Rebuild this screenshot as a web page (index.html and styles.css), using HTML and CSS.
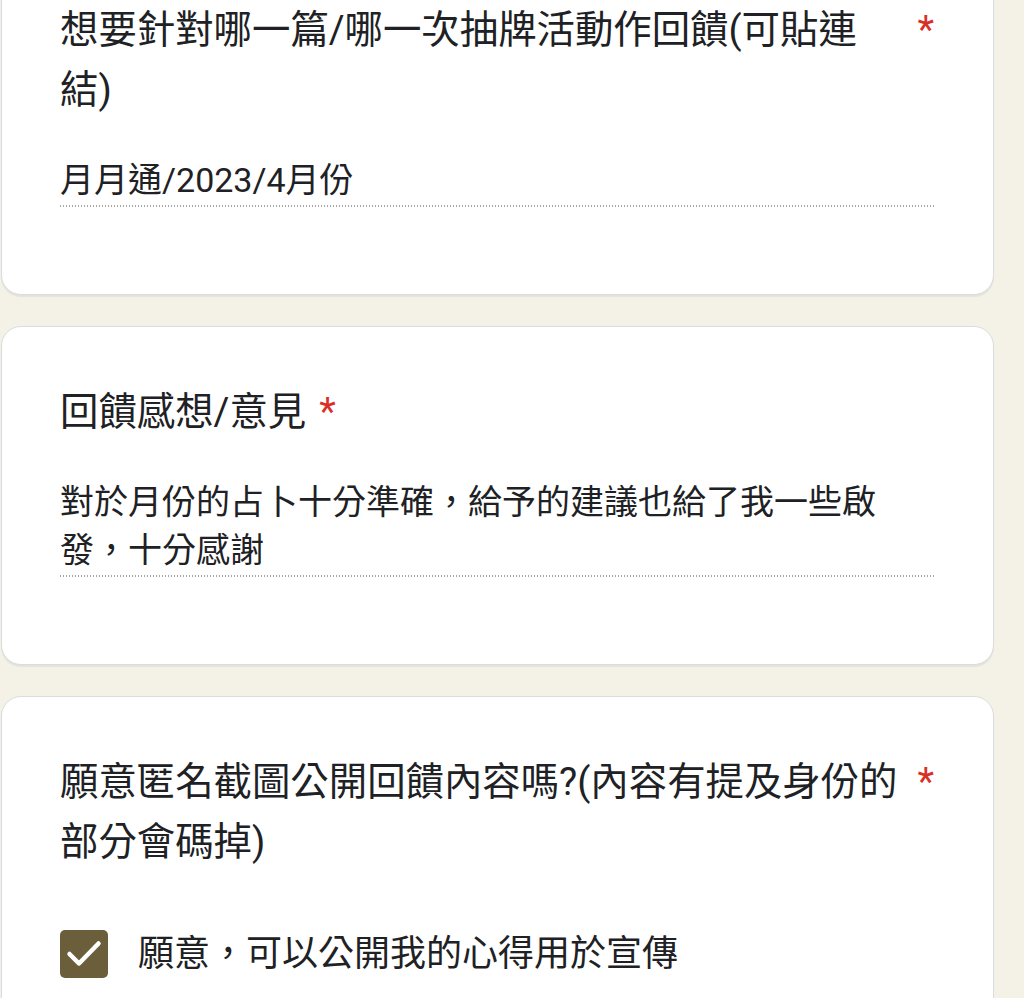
FILE: index.html
```html
<!DOCTYPE html>
<html lang="zh-Hant">
<head>
    <meta charset="UTF-8">
    <meta name="viewport" content="width=device-width, initial-scale=1.0">
    <title>回饋表單</title>
    <link rel="stylesheet" href="styles.css">
</head>
<body>

<div class="form">
    <div class="card">
        <div class="question">
            <div class="title">想要針對哪一篇/哪一次抽牌活動作回饋(可貼連結)</div>
            <span class="req">*</span>
        </div>
        <div class="answer">月月通/2023/4月份</div>
    </div>

    <div class="card">
        <div class="question">
            <div class="title">回饋感想/意見</div>
            <span class="req">*</span>
        </div>
        <div class="answer">對於月份的占卜十分準確，給予的建議也給了我一些啟發，十分感謝</div>
    </div>

    <div class="card">
        <div class="question">
            <div class="title">願意匿名截圖公開回饋內容嗎?(內容有提及身份的部分會碼掉)</div>
            <span class="req">*</span>
        </div>
        <div class="option">
            <span class="checkbox">
                <svg viewBox="0 0 48 48" width="48" height="48">
                    <path d="M9.5 24 L19 33.5 L38.5 13.5" fill="none" stroke="#fff" stroke-width="4.5" stroke-linecap="round" stroke-linejoin="round"/>
                </svg>
            </span>
            <span class="option-label">願意，可以公開我的心得用於宣傳</span>
        </div>
    </div>
</div>

</body>
</html>
```

FILE: styles.css
```css
body {
    margin: 0;
    padding: 0;
    background-color: #f4f1e7;
    font-family: Roboto, "Noto Sans CJK TC", sans-serif;
    color: #202124;
    overflow: hidden;
}
.form {
    margin-top: -56px;
    padding-left: 1px;
    width: 993px;
}
.card {
    background-color: #fff;
    border: 1px solid #dadce0;
    border-radius: 20px;
    box-shadow: 0 2px 1px rgba(0, 0, 0, 0.06);
    padding: 55px 58px 87px 58px;
    margin-bottom: 31px;
}
.question {
    display: flex;
    align-items: flex-start;
    font-size: 38.4px;
    line-height: 60px;
}
.title {
    flex: 0 1 auto;
}
.req {
    flex: none;
    color: #d93025;
    padding-left: 13px;
    padding-right: 1px;
}
.answer {
    margin-top: 36px;
    font-size: 34px;
    line-height: 48px;
    background-image: linear-gradient(to right, #a8a8a8 1px, transparent 1px);
    background-size: 3px 2px;
    background-repeat: repeat-x;
    background-position: left bottom;
    padding-bottom: 3px;
}
.option {
    display: flex;
    align-items: center;
    margin-top: 58px;
}
.checkbox {
    width: 48px;
    height: 48px;
    border-radius: 5px;
    background-color: #6b5f3b;
    display: flex;
    flex: none;
}
.option-label {
    margin-left: 30px;
    font-size: 36px;
    line-height: 48px;
}
```
